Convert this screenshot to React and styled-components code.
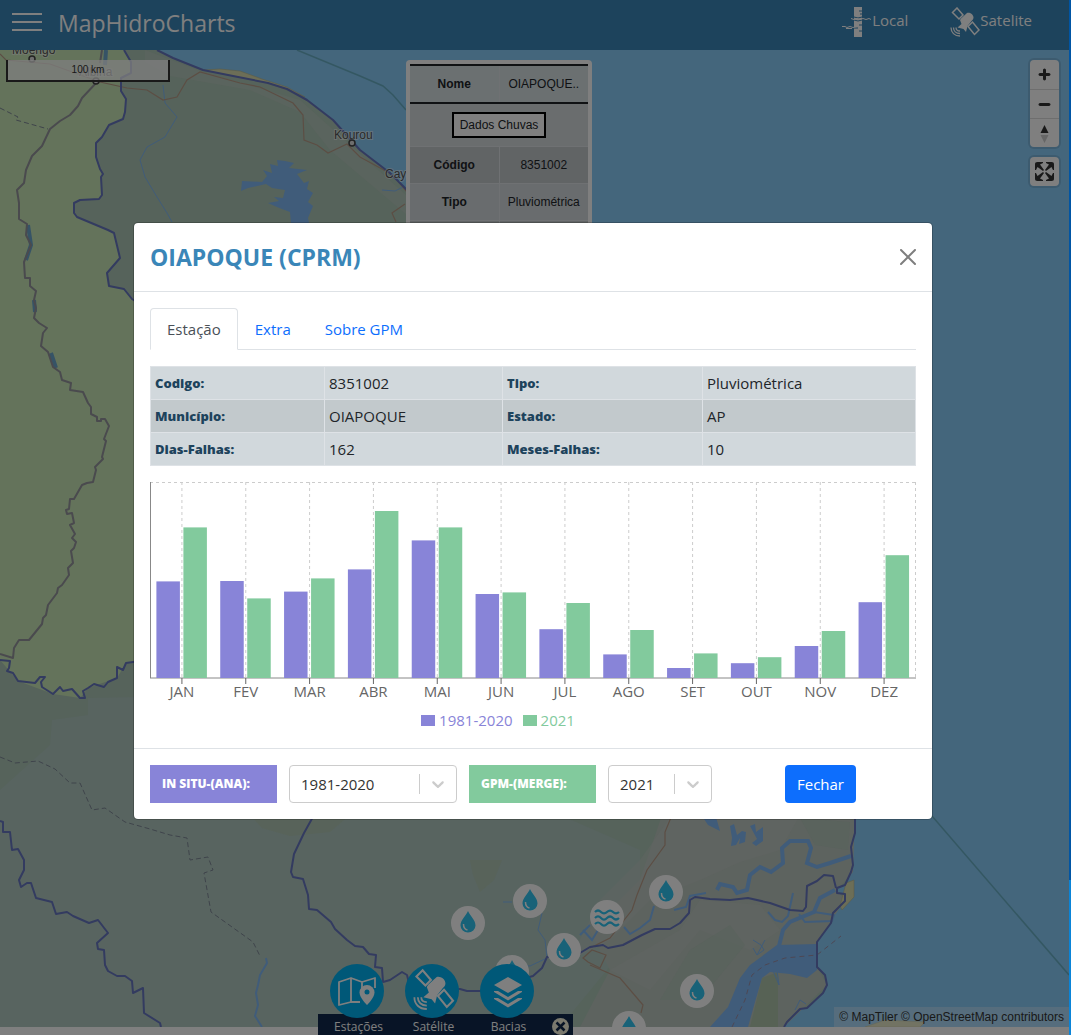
import React, { useState } from "react";
import styled, { createGlobalStyle } from "styled-components";

const ui = '"Open Sans", "Noto Sans", sans-serif';
const mapFont = '"Liberation Sans", Arial, sans-serif';

const GlobalStyle = createGlobalStyle`
  *, *::before, *::after { box-sizing: border-box; }
  body { margin: 0; background: #fff; color: #212529; font: 15px/24px ${ui}; }
  button, select { font: inherit; color: inherit; }
`;

/* ---------- page frame ---------- */
const Frame = styled.div`
  display: flex;
  height: 100vh;
  overflow: hidden;
`;
const Page = styled.div`
  position: relative;
  flex: 1;
  display: flex;
  flex-direction: column;
  padding-bottom: 8px;
`;
const Edge = styled.div`
  width: 2px;
  background: linear-gradient(#0055a4 0 85%, #0a84d8 85%);
`;
const TopBar = styled.header`
  display: flex;
  align-items: flex-start;
  height: 50px;
  padding: 7px 37px 0 12px;
  background: #3a86b8;
  color: #fff;
`;
const MenuButton = styled.button`
  display: flex;
  flex-direction: column;
  gap: 6px;
  width: 30px;
  margin: 6px 16px 0 0;
  padding: 0;
  border: 0;
  background: none;
  span { height: 2px; background: #fff; }
`;
const Brand = styled.h1`
  flex: 1;
  margin: 0;
  font-size: 23px;
  font-weight: 400;
  line-height: 32px;
`;
const TopLinks = styled.nav`
  display: flex;
  gap: 42px;
`;
const TopLink = styled.a`
  display: flex;
  color: #fff;
  text-decoration: none;
  line-height: 26px;
  svg { display: block; width: 30px; height: 30px; }
`;

/* ---------- map ---------- */
const MapArea = styled.main`
  position: relative;
  flex: 1;
  overflow: hidden;
  background: #88ccf8;
  font: 12px/20px ${mapFont};
`;
const MapDrawing = styled.svg`
  position: absolute;
  top: 0;
  left: 0;
  display: block;
  width: 1069px;
  height: 977px;
`;
const ScaleBar = styled.div`
  position: absolute;
  top: 10px;
  left: 6px;
  width: 164px;
  height: 22px;
  border: 2px solid #333;
  border-top: 0;
  background: rgba(255, 255, 255, 0.75);
  color: #333;
  font-size: 10px;
  text-align: center;
`;
const Controls = styled.div`
  position: absolute;
  top: 10px;
  right: 10px;
  display: grid;
  gap: 10px;
`;
const ControlGroup = styled.div`
  display: flex;
  flex-direction: column;
  border-radius: 4px;
  background: #fff;
  box-shadow: 0 0 0 2px rgba(0, 0, 0, 0.1);
`;
const ControlButton = styled.button`
  width: 29px;
  height: 29px;
  padding: 0;
  border: 0;
  background: none;
  & + & { border-top: 1px solid #ddd; }
  svg { display: block; width: 29px; height: 29px; }
`;
const Attribution = styled.div`
  position: absolute;
  right: 0;
  bottom: 0;
  padding: 0 5px;
  background: rgba(255, 255, 255, 0.3);
  color: #333;
  a { color: inherit; text-decoration: none; }
`;
const Popup = styled.section`
  position: absolute;
  top: 10px;
  left: 406px;
  width: 186px;
  padding: 4px;
  border-radius: 4px;
  background: #fff;
`;
const PopupTable = styled.table`
  width: 100%;
  border-collapse: collapse;
  table-layout: fixed;
  text-align: center;
  th, td { height: 37px; padding: 8px 0; border: 0 solid #dee2e6; border-top-width: 1px; }
  th + td { border-left-width: 1px; }
`;
const PopupRow = styled.tr`
  background: ${(p) => p.$tone};
`;
const PopupHead = styled.thead`
  border-top: 2px solid #212529;
  border-bottom: 2px solid #212529;
  th, td { height: 38px; border-top: 0; border-bottom: 0; }
`;
const RainButton = styled.button`
  height: 26px;
  padding: 0 6px;
  border: 2px solid #000;
  background: #fff;
  line-height: 20px;
`;
const Marker = styled.button`
  position: absolute;
  left: ${(p) => p.$x - 17}px;
  top: ${(p) => p.$y - 67}px;
  width: 34px;
  height: 34px;
  padding: 0;
  border: 0;
  border-radius: 50%;
  background: #fff;
  svg { display: block; width: 34px; height: 34px; }
`;

/* ---------- bottom dock ---------- */
const Dock = styled.nav`
  position: absolute;
  left: 318px;
  bottom: 0;
  display: flex;
  align-items: flex-end;
  width: 255px;
  height: 71px;
  padding-left: 1px;
  background: linear-gradient(transparent 50px, #10284c 50px);
  color: #fff;
  font-size: 12px;
  line-height: 18px;
`;
const DockItem = styled.button`
  display: flex;
  flex-direction: column;
  align-items: center;
  width: 75px;
  height: 71px;
  padding: 0;
  border: 0;
  background: none;
  svg { flex: none; width: 54px; height: 54px; }
`;
const DockLabel = styled.span`
  padding-left: 4px;
`;
const DockClose = styled.button`
  width: 29px;
  height: 17px;
  padding: 0 0 0 8px;
  border: 0;
  background: none;
  svg { display: block; width: 17px; height: 17px; }
`;

/* ---------- dialog ---------- */
const Backdrop = styled.div`
  position: absolute;
  inset: 0;
  display: flex;
  align-items: center;
  justify-content: center;
  padding: 7px 3px 0 0;
  background: rgba(0, 0, 0, 0.5);
`;
const Dialog = styled.section`
  width: 100%;
  max-width: 800px;
  border: 1px solid rgba(0, 0, 0, 0.2);
  border-radius: 5px;
  background: #fff;
  background-clip: padding-box;
`;
const DialogHeader = styled.header`
  display: flex;
  align-items: center;
  justify-content: space-between;
  padding: 16px;
  border-bottom: 1px solid #dee2e6;
`;
const DialogTitle = styled.h2`
  margin: 0;
  color: #3a86b8;
  font-size: 23px;
  font-weight: 700;
  line-height: 36px;
`;
const CloseButton = styled.button`
  padding: 0;
  border: 0;
  background: none;
  opacity: 0.5;
  svg { display: block; width: 16px; height: 16px; }
`;
const DialogBody = styled.div`
  padding: 16px;
`;
const Tabs = styled.div`
  display: flex;
  border-bottom: 1px solid #dee2e6;
`;
const Tab = styled.button`
  height: 42px;
  margin-bottom: -1px;
  padding: 0 16px;
  border: 1px solid;
  border-color: ${(p) => (p.$active ? "#dee2e6 #dee2e6 #fff" : "transparent")};
  border-radius: 4px 4px 0 0;
  background: ${(p) => (p.$active ? "#fff" : "none")};
  color: ${(p) => (p.$active ? "#495057" : "#0d6efd")};
`;
const InfoTable = styled.table`
  width: 100%;
  margin: 16px 0;
  border-collapse: collapse;
  table-layout: fixed;
  background: #d1d8dc;
  tr:nth-child(2) { background: #c2c9cc; }
  th, td { height: 33px; padding: 4px; border: 1px solid #dee2e6; text-align: left; }
  th { color: #1d435c; font-size: 13px; font-weight: 800; }
`;
const ChartSvg = styled.svg`
  display: block;
  width: 100%;
  text { font: 15px ${ui}; fill: #666; text-anchor: middle; }
`;
const Legend = styled.ul`
  display: flex;
  justify-content: center;
  gap: 10px;
  margin: 0;
  padding: 0 70px 0 0;
  list-style: none;
`;
const LegendItem = styled.li`
  display: flex;
  align-items: center;
  gap: 4px;
  color: ${(p) => p.$color};
  &::before { content: ""; width: 14px; height: 11px; background: ${(p) => p.$color}; }
`;
const DialogFooter = styled.footer`
  display: flex;
  align-items: center;
  gap: 12px;
  padding: 16px;
  border-top: 1px solid #dee2e6;
`;
const SourceLabel = styled.label`
  width: 127px;
  padding: 0 12px;
  background: ${(p) => p.$color};
  color: #fff;
  font-size: 12px;
  font-weight: 800;
  line-height: 38px;
`;
const SelectBox = styled.div`
  position: relative;
  width: ${(p) => p.$width}px;
  height: 38px;
  select {
    width: 100%;
    height: 100%;
    padding: 0 40px 0 11px;
    border: 1px solid #ccc;
    border-radius: 4px;
    background: #fff;
    color: #333;
    appearance: none;
  }
`;
const SelectMark = styled.span`
  position: absolute;
  top: 9px;
  right: 1px;
  height: 20px;
  padding: 0 8px;
  border-left: 1px solid #ccc;
  pointer-events: none;
  svg { display: block; width: 20px; height: 20px; fill: #ccc; }
`;
const PrimaryButton = styled.button`
  height: 38px;
  margin: 0 60px 0 auto;
  padding: 0 12px;
  border: 0;
  border-radius: 4px;
  background: #0d6efd;
  color: #fff;
`;

/* ---------- icons ---------- */
const SatelliteShape = () => (
  <g>
    <g fill="none" stroke="#fff" strokeWidth="1.5">
      <path d="M2.5 5.5 7 1l6 7-4 4z" />
      <path d="M18 19.500l4.500-4.500 6.500 8-4.500 4.500z" />
      <path d="M1 20.500c0 5 3.500 8.500 9 8.500M3.500 20.500c0 3.500 2.500 6 6.500 6M6 20.500c0 2 1.500 3.500 4 3.500" strokeWidth="1.300" />
    </g>
    <path fill="#fff" d="M11 11.500 17 6c2-1.200 6.500 1 6.500 4.500 0 1.500-1 2.500-2 3.500l-4 5-1.500 6-2.500-3-6-1.500 4-3.500-1.500-4z" />
  </g>
);
const GaugeIcon = () => (
  <svg viewBox="0 0 30 30" aria-hidden="true">
    <path fill="#fff" d="M12 0h8v30h-8z" />
    <path fill="none" stroke="#3a86b8" strokeWidth="1" d="M17 4h3M18 7h2M12 10l4 1 4-1M12 13l4 1 4-1M17 18h3M12 21h4M17 24h3" />
    <path fill="none" stroke="#fff" d="M9 11.500l3 1 3-1 3 1 3-1 3 1 3-1 2 1M0 19.500h3l2 1 3-1 3 1 4-1M4 21.500h6" />
  </svg>
);
const Drop = () => (
  <svg viewBox="0 0 34 34" aria-hidden="true">
    <path fill="#30c4f0" d="M17 5c2 5 7.500 9 7.500 14.500a7.500 7 0 0 1-15 0C9.500 14 15 10 17 5z" />
    <path fill="none" stroke="#fff" strokeWidth="1.500" d="M12.500 18c0 4 1.500 5.500 4 6" />
  </svg>
);
const Waves = () => (
  <svg viewBox="0 0 34 34" aria-hidden="true">
    <g fill="none" stroke="#30c4f0" strokeWidth="2.200">
      {[12, 18, 24].map((y) => (
        <path key={y} d={`M5 ${y}q3-3 6 0t6 0t6 0t6 0`} />
      ))}
    </g>
  </svg>
);
const Chevron = () => (
  <svg viewBox="0 0 20 20" aria-hidden="true">
    <path d="M4.516 7.548c0.436-0.446 1.043-0.481 1.576 0l3.908 3.747 3.908-3.747c0.533-0.481 1.141-0.446 1.574 0 0.436 0.445 0.408 1.197 0 1.615-0.406 0.418-4.695 4.502-4.695 4.502-0.217 0.223-0.502 0.335-0.787 0.335s-0.570-0.112-0.789-0.335c0 0-4.287-4.084-4.695-4.502s-0.436-1.170 0-1.615z" />
  </svg>
);

/* ---------- map drawing ---------- */
const coast =
  "M124 50H157L173 58 203 70 233 76 268 83 287 89 307 100 333 120 360 150 373 160 390 173 407 190 480 290 640 480 800 700 855 815 855 833 851 847 853 865 851 872 845 885 837 888 837 893 845 894 845 901 833 913 831 923 817 942 817 967 825 975 827 985 823 993 807 1008 800 1009 787 1022 784 1027";
const westBasin =
  "M124 50 131 62 131 73 121 78 121 91 126 99 125 112 123 119 109 125 102 137 96 143 96 157 100 169 103 174 101 177 102 195 99 199 80 200 74 203 74 213 77 217 108 230 114 233 120 258 107 273 109 286 124 289 132 299 150 310";
const southBasin =
  "M0 660 10 661 9 668 7 671 13 673 18 681 35 683 40 677 45 677 41 682 42 687 53 694 60 687 63 691 72 689 80 698 85 698 83 691 88 688 94 684 104 687 108 682 117 678 117 667 123 670 126 663 140 661";
const border =
  "M102 50 100 63M97 82 82 98 78 106 70 115 60 121 50 129 42 146 32 156 26 170 24 183 17 190 19 203 19 219 27 224 26 235 31 245 24 262 25 278 30 278 30 286 36 291 34 300 36 308 34 318 39 323 47 328 43 333 41 346 48 352 53 367 60 372 62 380 71 383 70 390 83 392 88 403 91 407 91 414 97 417 97 421 101 421 101 419 105 419 109 426 104 439 106 441 102 457 103 459 95 467 96 470 93 482 87 483 82 485 74 499 70 499 69 509 66 510 67 514 72 513 74 523 70 525 75 534 72 538 76 542 74 548 71 551 73 563 68 568 69 575 62 585 58 588 57 593 48 605 46 615 43 618 42 624 29 640 19 640 14 648 13 658 0 654";
const innerBasins = [
  "M0 821 3 822 3 832 10 832 12 850 18 849 24 860 24 870 19 880 21 887 27 883 31 883 36 898 52 902 56 914 67 912 73 916 89 923 98 920 108 933 97 943 98 949 104 950 105 965 108 971 117 976 125 976 132 981 133 993 143 988 144 1013 160 1023 161 1027",
  "M314 815 304 833 294 854 291 872 293 877 303 879 308 895 309 909 317 910 331 922 335 929 347 940 355 946 363 947 369 954 376 955 375 967 382 968 383 982 390 980 402 972 407 975 410 987 460 989 467 991 480 991 533 976 542 968 547 957 580 953 590 947 603 945 608 948 623 945 642 935 655 929 670 929 680 923 689 913 690 900 695 897 710 899 730 900 748 898 770 903 790 910 803 911 806 907 807 886 817 881 824 875 833 876 836 888",
];
const deltaRivers = [
  ["M717 890 720 884 733 887 737 893 747 890 750 875 760 867 771 872 783 863 782 848 790 841 808 841 811 848 807 863 817 867 830 863 851 856", 4],
  ["M835 890 820 898 814 912 790 922 783 930 779 946", 4],
  ["M814 912 834 915 832 921 805 922 799 914", 2],
  ["M768 912 775 920 782 922 788 916 793 893", 2],
  ["M706 893 690 896 686 907 674 910", 2],
  ["M654 906 650 920 640 928 630 934 624 927", 2],
  ["M503 902 512 902M542 913 538 930 545 940 547 958 530 966 520 965", 1],
  ["M753 940 761 945 764 950 757 955 753 948M757 955 765 940M772 968 779 985 777 970M795 1010 800 1000 806 1004", 1],
];

const MapPicture = () => (
  <MapDrawing viewBox="0 50 1069 977" role="img" aria-label="Mapa">
    <path fill="#acc6b6" d={`${coast}H0V50z`} />
    <path fill="#b0c8c0" d="M140 697 88 698 88 715 52 720 50 745 0 790V1027H560L640 930V850L560 815H134z" />
    <path fill="#c2cac4" d="M145 50 203 72 300 100 407 196 407 215 330 150 300 112 250 90 170 76 145 62z" opacity=".45" />
    <path fill="#bac6be" d="M662 815H855L853 872 837 890 845 900 817 942 817 967 827 985 784 1027H580L610 970 590 930 640 880z" />
    <path fill="#c8cac8" d="M672 815H800L780 850 740 862 700 880 650 900 610 940 570 960 600 900 640 860zM700 900 760 905 780 930 750 950 700 930 650 990 610 970 680 930z" opacity=".4" />
    <path fill="#aec6b6" d="M690 950 730 925 745 945 700 1000 660 1000zM800 818 850 822 848 850 815 845z" opacity=".5" />
    <path fill="#c8e6b6" d={`${westBasin} 150 661 140 661 126 663 117 678 88 688 80 698 53 694 18 681 0 660V50z`} />
    <path fill="#b0c6ac" d="M470 860H502L494 880 480 892 473 875zM250 815H350L330 832 290 836 262 828z" opacity=".6" />
    <path fill="#aec4aa" d="M750 1027 762 978 778 972 778 1027z" />
    <path fill="#d8dcae" d="M846 883 854 880V897L842 910 840 906zM203 70 220 69 240 71 262 79 287 87 305 97 290 91 268 83 233 76zM865 1027 885 1020 925 1022 920 1027z" stroke="#b9b080" strokeWidth=".5" />
    <path fill="#80b8f4" d="M710 1027 728 1007 740 978 750 965 777 945 817 944V970L807 978 790 974 770 972 762 978 755 1002 748 1027zM704 819 716 817 720 831 708 825zM730 826l4-2 3 11 5-4 4 1-1 10-6 2 1-6-4 7-5 1 1-8zM750 826l5-2 1 8 7-5 0 14-7 5-4-3 5-4z" />
    <path fill="#80b8f4" d="M242 181l20 1 5-6-4-6 9 3-2-9 8 2-1-6 8 1 9 2-5 5 18 2-10 4 7 9 5-2-2 8 6 4-5 9 5 4-5 12 2 10-9-3-10-1-1-12-8-3-5-2-9-4 11-2-5-4 9 1 2-8-13-2-6-4-18 4-7 3z" />
    <path fill="none" stroke="#80b8f4" d="M163 85 165 103 177 117 165 137 147 147 140 160 145 177 157 197 167 213 172 222M382 190 395 191 405 186" />
    <path fill="none" stroke="#6ca6cc" strokeWidth="4" d="M106 50 105 65M28 225 31 245 26 260M34 300 35 312M51 353 56 368" />
    <g fill="none" stroke="#80b8f4">
      {deltaRivers.map(([d, w]) => (
        <path key={d} d={d} strokeWidth={w} />
      ))}
      <path d="M266 958 267 963 260 975 258 985 256 993 258 1005 255 1016 262 1027M580 935 590 925M583 930 592 940 598 930" strokeWidth="2" />
    </g>
    <g fill="none" stroke="#b89c88" strokeWidth="1.200">
      <path d="M0 54 6 60 50 64 100 82 127 88 147 90 163 100 177 97 187 80 200 72 240 83 260 87 293 103 303 115 304 140 317 145 328 153 347 144 360 157 393 175 407 192M396 222 392 213 405 204" />
      <path d="M672 815 665 832 665 845 647 870 637 895 632 910 610 938 590 948M590 965 620 978 643 1005 641 1013M583 958 592 950 606 955 600 968 588 962z" />
    </g>
    <path fill="none" stroke="#9a8fa8" strokeDasharray="5 4" d="M732 1027 745 1000 752 975 765 965 785 958 817 955 841 936" />
    <path fill="none" stroke="#7e8896" strokeDasharray="5 3" d="M0 757 15 763 38 761 55 769 70 783 80 783 92 810 105 808 125 822 150 829 170 835 187 838 190 860 208 857 213 870 204 873 211 912 253 942 260 956M0 108 18 117 16 120 48 129" />
    <path fill="none" stroke="#60a8b8" strokeWidth="1.500" d="M297 50 360 76 383 86 393 95 406 110M932 816 1069 975" opacity=".8" />
    <path fill="none" stroke="#94949c" strokeWidth="2" d={border} strokeLinejoin="round" />
    <g fill="none" stroke="#6676c0" strokeWidth="2" strokeLinejoin="round">
      <path d={coast.replace("M124 50H157", "M157 50")} />
      <path d={westBasin} />
      <path d={southBasin} />
      {innerBasins.map((d) => (
        <path key={d} d={d} />
      ))}
    </g>
    <g fill="#555" stroke="#fff" strokeWidth="2" paintOrder="stroke" fontSize="12" strokeOpacity=".5">
      <text x="12" y="54">Moengo</text>
      <text x="79" y="76">Albina</text>
      <text x="334" y="139">Kourou</text>
      <text x="385" y="178">Cayenne</text>
    </g>
    <g fill="#ddd" stroke="#444" strokeWidth="1.500">
      <circle cx="32" cy="59" r="3" />
      <circle cx="96" cy="81" r="3" />
      <circle cx="352" cy="143" r="3" />
    </g>
  </MapDrawing>
);

const markers = [
  { x: 468, y: 923 },
  { x: 530, y: 901 },
  { x: 564, y: 950 },
  { x: 512, y: 972 },
  { x: 607, y: 917, river: true },
  { x: 666, y: 892 },
  { x: 697, y: 991 },
  { x: 629, y: 1028 },
];

/* ---------- chart ---------- */
const PURPLE = "#8884d8";
const GREEN = "#82ca9d";
const rain = [
  ["JAN", 96.6, 150.6], ["FEV", 97, 79.6], ["MAR", 86.4, 99.6], ["ABR", 108.6, 167],
  ["MAI", 137.6, 150.6], ["JUN", 84, 85.6], ["JUL", 48.8, 75], ["AGO", 23.6, 48],
  ["SET", 10, 24.6], ["OUT", 14.8, 20.8], ["NOV", 32, 47], ["DEZ", 75.8, 122.8],
];
const BAND = 766 / 12;

const Chart = () => (
  <ChartSvg viewBox="0 0 766 226" role="img" aria-label="Chuva mensal">
    <g stroke="#ccc" strokeDasharray="3 3">
      <path d="M0 .5H766M765.500 0V196" />
      {rain.map(([m], i) => (
        <path key={m} d={`M${BAND * (i + 0.5)} 0V196`} />
      ))}
    </g>
    <path d="M.5 0V196M0 196H766" stroke="#888" fill="none" />
    {rain.map(([month, a, b], i) => (
      <g key={month}>
        <rect x={BAND * i + 6.4} y={196 - a} width="23.500" height={a} fill={PURPLE} />
        <rect x={BAND * i + 33.4} y={196 - b} width="23.500" height={b} fill={GREEN} />
        <path d={`M${BAND * (i + 0.5)} 196v6`} stroke="#666" />
        <text x={BAND * (i + 0.5)} y="215">{month}</text>
      </g>
    ))}
  </ChartSvg>
);

const tabs = ["Estação", "Extra", "Sobre GPM"];
const info = [
  ["Codigo:", "8351002", "Tipo:", "Pluviométrica"],
  ["Município:", "OIAPOQUE", "Estado:", "AP"],
  ["Dias-Falhas:", "162", "Meses-Falhas:", "10"],
];

export default function App() {
  const [tab, setTab] = useState(tabs[0]);
  return (
    <Frame>
      <GlobalStyle />
      <Page>
        <TopBar>
          <MenuButton aria-label="Menu"><span /><span /><span /></MenuButton>
          <Brand>MapHidroCharts</Brand>
          <TopLinks>
            <TopLink href="#local"><GaugeIcon />Local</TopLink>
            <TopLink href="#satelite">
              <svg viewBox="0 0 30 30" aria-hidden="true"><SatelliteShape /></svg>Satelite
            </TopLink>
          </TopLinks>
        </TopBar>
        <MapArea>
          <MapPicture />
          <ScaleBar>100 km</ScaleBar>
          {markers.map((m) => (
            <Marker key={`${m.x}-${m.y}`} $x={m.x} $y={m.y} aria-label={m.river ? "Fluviométrica" : "Pluviométrica"}>
              {m.river ? <Waves /> : <Drop />}
            </Marker>
          ))}
          <Popup>
            <PopupTable>
              <PopupHead>
                <PopupRow $tone="#d6e0e3"><th>Nome</th><td>OIAPOQUE..</td></PopupRow>
              </PopupHead>
              <tbody>
                <PopupRow $tone="#d5dadd"><td colSpan={2}><RainButton>Dados Chuvas</RainButton></td></PopupRow>
                <PopupRow $tone="#c3c8cb"><th>Código</th><td>8351002</td></PopupRow>
                <PopupRow $tone="#d3d9dc"><th>Tipo</th><td>Pluviométrica</td></PopupRow>
                <PopupRow $tone="#c3c8cb"><th>Estado</th><td>AP</td></PopupRow>
              </tbody>
            </PopupTable>
          </Popup>
          <Controls>
            <ControlGroup>
              <ControlButton aria-label="Aproximar">
                <svg viewBox="0 0 29 29" fill="#333"><path d="M14.500 8.500c-.75 0-1.500.75-1.500 1.500v3h-3c-.75 0-1.500.75-1.500 1.500S9.250 16 10 16h3v3c0 .75.75 1.500 1.500 1.500S16 19.750 16 19v-3h3c.75 0 1.500-.75 1.500-1.500S19.750 13 19 13h-3v-3c0-.75-.75-1.500-1.500-1.500z" /></svg>
              </ControlButton>
              <ControlButton aria-label="Afastar">
                <svg viewBox="0 0 29 29" fill="#333"><path d="M10 13c-.75 0-1.500.75-1.500 1.500S9.250 16 10 16h9c.75 0 1.500-.75 1.500-1.500S19.750 13 19 13h-9z" /></svg>
              </ControlButton>
              <ControlButton aria-label="Norte">
                <svg viewBox="0 0 29 29" fill="#333"><path d="M10.500 14l4-8 4 8h-8z" /><path fill="#ccc" d="M10.500 16l4 8 4-8h-8z" /></svg>
              </ControlButton>
            </ControlGroup>
            <ControlGroup>
              <ControlButton aria-label="Tela cheia">
                <svg viewBox="0 0 29 29" fill="#333"><path d="M24 16v5.500c0 1.750-.75 2.500-2.500 2.500H16v-1l3-1.500-4-5.500 1-1 5.500 4 1.500-3h1zM6 16l1.500 3 5.500-4 1 1-4 5.500 3 1.500v1H7.500C5.750 24 5 23.250 5 21.500V16h1zm7-11v1l-3 1.500 4 5.500-1 1-5.500-4L6 13H5V7.500C5 5.750 5.750 5 7.500 5H13zm11 2.500c0-1.750-.75-2.500-2.500-2.500H16v1l3 1.500-4 5.500 1 1 5.500-4 1.500 3h1V7.500z" /></svg>
              </ControlButton>
            </ControlGroup>
          </Controls>
          <Attribution>
            <a href="#maptiler">© MapTiler</a> <a href="#osm">© OpenStreetMap contributors</a>
          </Attribution>
        </MapArea>
        <Dock>
          <DockItem>
            <svg viewBox="0 0 54 54" aria-hidden="true">
              <circle cx="27" cy="27" r="27" fill="#00b0f0" />
              <path fill="none" stroke="#fff" strokeWidth="1.800" strokeLinejoin="round" d="M30 38 21 38 9 41V18l12-4 11 4 13-4v10M21 14v24M32 18v7" />
              <path fill="#fff" d="M37 21a7.500 7.500 0 0 1 7.500 7.500C44.500 34 37 41 37 41s-7.500-7-7.500-12.500A7.500 7.500 0 0 1 37 21z" />
              <circle cx="37" cy="28" r="2.500" fill="#00b0f0" />
            </svg>
            <DockLabel>Estações</DockLabel>
          </DockItem>
          <DockItem>
            <svg viewBox="0 0 54 54" aria-hidden="true">
              <circle cx="27" cy="27" r="27" fill="#00b0f0" />
              <g transform="translate(8 5) scale(1.380)"><SatelliteShape /></g>
            </svg>
            <DockLabel>Satélite</DockLabel>
          </DockItem>
          <DockItem>
            <svg viewBox="0 0 54 54" aria-hidden="true">
              <circle cx="27" cy="27" r="27" fill="#00b0f0" />
              <path fill="#fff" d="M28 13 42 21 28 29 14 21zM14 27h4l10 6 10-6h4v1L28 36.500 14 28zM14 34h4l10 6 10-6h4v1L28 43.500 14 35z" />
            </svg>
            <DockLabel>Bacias</DockLabel>
          </DockItem>
          <DockClose aria-label="Fechar menu">
            <svg viewBox="0 0 17 17"><circle cx="8.500" cy="8.500" r="8.500" fill="#f4f2dc" /><path stroke="#10284c" strokeWidth="2.500" d="M4.500 4.500l8 8M12.500 4.500l-8 8" /></svg>
          </DockClose>
        </Dock>
        <Backdrop>
          <Dialog role="dialog" aria-modal="true" aria-labelledby="station-title">
            <DialogHeader>
              <DialogTitle id="station-title">OIAPOQUE (CPRM)</DialogTitle>
              <CloseButton aria-label="Fechar janela">
                <svg viewBox="0 0 16 16"><path d="M.293.293a1 1 0 0 1 1.414 0L8 6.586 14.293.293a1 1 0 1 1 1.414 1.414L9.414 8l6.293 6.293a1 1 0 0 1-1.414 1.414L8 9.414l-6.293 6.293a1 1 0 0 1-1.414-1.414L6.586 8 .293 1.707a1 1 0 0 1 0-1.414z" /></svg>
              </CloseButton>
            </DialogHeader>
            <DialogBody>
              <Tabs role="tablist">
                {tabs.map((t) => (
                  <Tab key={t} role="tab" aria-selected={t === tab} $active={t === tab} onClick={() => setTab(t)}>{t}</Tab>
                ))}
              </Tabs>
              <InfoTable>
                <colgroup><col width="174" /><col width="178" /><col width="200" /><col /></colgroup>
                <tbody>
                  {info.map(([a, b, c, d]) => (
                    <tr key={a}><th scope="row">{a}</th><td>{b}</td><th scope="row">{c}</th><td>{d}</td></tr>
                  ))}
                </tbody>
              </InfoTable>
              <Chart />
              <Legend>
                <LegendItem $color={PURPLE}>1981-2020</LegendItem>
                <LegendItem $color={GREEN}>2021</LegendItem>
              </Legend>
            </DialogBody>
            <DialogFooter>
              <SourceLabel htmlFor="insitu" $color={PURPLE}>IN SITU-(ANA):</SourceLabel>
              <SelectBox $width={168}>
                <select id="insitu" defaultValue="1981-2020"><option>1981-2020</option></select>
                <SelectMark><Chevron /></SelectMark>
              </SelectBox>
              <SourceLabel htmlFor="gpm" $color={GREEN}>GPM-(MERGE):</SourceLabel>
              <SelectBox $width={104}>
                <select id="gpm" defaultValue="2021"><option>2021</option><option>2020</option></select>
                <SelectMark><Chevron /></SelectMark>
              </SelectBox>
              <PrimaryButton>Fechar</PrimaryButton>
            </DialogFooter>
          </Dialog>
        </Backdrop>
      </Page>
      <Edge />
    </Frame>
  );
}
